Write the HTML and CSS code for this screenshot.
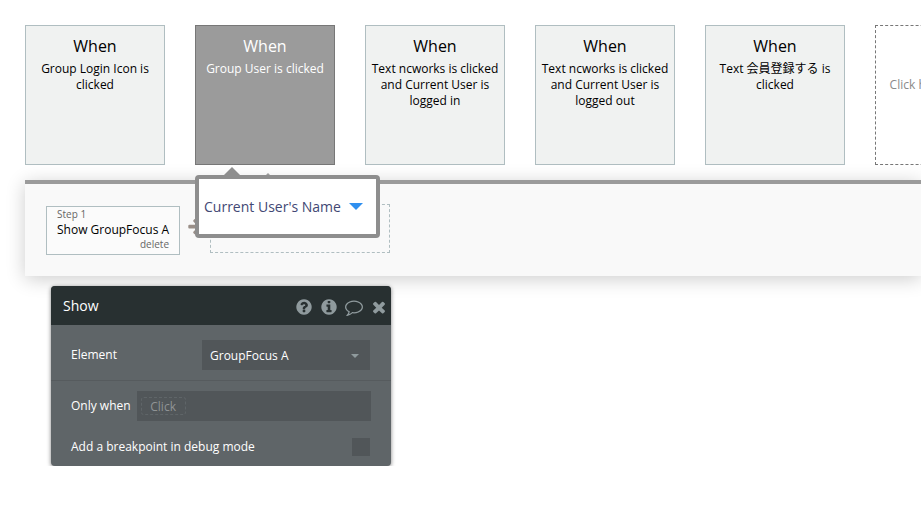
FILE: index.html
```html
<!DOCTYPE html>
<html lang="en">
<head>
    <meta charset="UTF-8">
    <meta name="viewport" content="width=device-width, initial-scale=1.0">
    <title>Workflow</title>
    <link rel="stylesheet" href="styles.css">
</head>
<body>
    <div class="events">
        <button class="event"><span class="when">When</span>Group Login Icon is clicked</button>
        <button class="event selected"><span class="when">When</span>Group User is clicked</button>
        <button class="event"><span class="when">When</span>Text ncworks is clicked and Current User is logged in</button>
        <button class="event"><span class="when">When</span>Text ncworks is clicked and Current User is logged out</button>
        <button class="event"><span class="when">When</span>Text 会員登録する is clicked</button>
        <button class="event new-event">Click here to add an event...</button>
    </div>

    <div class="actions">
        <div class="step">
            <span class="step-number">Step 1</span>
            <span class="step-name">Show GroupFocus A</span>
            <a href="#" class="delete">delete</a>
        </div>
        <svg class="arrow" viewBox="0 0 1792 1792"><path d="M1600 960q0 54-37 91l-651 651q-39 37-91 37-51 0-90-37l-75-75q-38-38-38-91t38-91l293-293h-704q-52 0-84.5-37.5t-32.5-90.5v-128q0-53 32.5-90.5t84.5-37.5h704l-293-294q-38-36-38-90t38-90l75-75q38-38 90-38 53 0 91 38l651 651q37 35 37 90z"/></svg>
        <div class="new-step"></div>
        <div class="event-caret"></div>
        <button class="popup">
            Current User's Name
            <svg class="popup-caret" viewBox="0 0 14 7"><path d="M0 0h14l-7 7z"/></svg>
        </button>
    </div>

    <div class="editor">
        <div class="editor-header">
            <span class="title">Show</span>
            <button class="icon" aria-label="Help"><svg viewBox="0 0 1792 1792"><path d="M1024 1376v-192q0-14-9-23t-23-9h-192q-14 0-23 9t-9 23v192q0 14 9 23t23 9h192q14 0 23-9t9-23zm256-672q0-88-55.5-163t-138.5-116-170-41q-243 0-371 213-15 24 8 42l132 100q7 6 19 6 16 0 25-12 53-68 86-92 34-24 86-24 48 0 85.5 26t37.5 59q0 38-20 61t-68 45q-63 28-115.5 86.5t-52.5 125.5v36q0 14 9 23t23 9h192q14 0 23-9t9-23q0-19 21.5-49.5t54.5-49.5q32-18 49-28.5t46-35 44.5-48 28-60.5 12.5-81zm384 192q0 209-103 385.5t-279.5 279.5-385.5 103-385.5-103-279.5-279.5-103-385.5 103-385.5 279.5-279.5 385.5-103 385.5 103 279.5 279.5 103 385.5z"/></svg></button>
            <button class="icon" aria-label="Info"><svg viewBox="0 0 1792 1792"><path d="M1152 1376v-160q0-14-9-23t-23-9h-96v-512q0-14-9-23t-23-9h-320q-14 0-23 9t-9 23v160q0 14 9 23t23 9h96v320h-96q-14 0-23 9t-9 23v160q0 14 9 23t23 9h448q14 0 23-9t9-23zm-128-896v-160q0-14-9-23t-23-9h-192q-14 0-23 9t-9 23v160q0 14 9 23t23 9h192q14 0 23-9t9-23zm640 416q0 209-103 385.5t-279.5 279.5-385.5 103-385.5-103-279.5-279.5-103-385.5 103-385.5 279.5-279.5 385.5-103 385.5 103 279.5 279.5 103 385.5z"/></svg></button>
            <button class="icon" aria-label="Comment"><svg viewBox="0 0 1792 1792"><path d="M896 384q-204 0-381.5 69.5t-282 187.5-104.5 255q0 112 71.5 213.5t201.5 175.5l87 50-27 96q-24 91-70 172 152-63 275-171l43-38 57 6q69 8 130 8 204 0 381.5-69.5t282-187.5 104.5-255-104.5-255-282-187.5-381.5-69.5zm896 512q0 174-120 321.5t-326 233-450 85.5q-70 0-145-8-198 175-460 242-49 14-114 22h-5q-15 0-27-10.5t-16-27.5v-1q-3-4-.5-12t2-10 4.5-9.5l6-9 7-8.5 8-9q7-8 31-34.5t34.5-38 31-39.5 32.5-51 27-59 26-76q-157-89-247.5-220t-90.5-281q0-174 120-321.5t326-233 450-85.5 450 85.5 326 233 120 321.5z"/></svg></button>
            <button class="icon" aria-label="Close"><svg viewBox="0 0 1792 1792"><path d="M1490 1322q0 40-28 68l-136 136q-28 28-68 28t-68-28l-294-294-294 294q-28 28-68 28t-68-28l-136-136q-28-28-28-68t28-68l294-294-294-294q-28-28-28-68t28-68l136-136q28-28 68-28t68 28l294 294 294-294q28-28 68-28t68 28l136 136q28 28 28 68t-28 68l-294 294 294 294q28 28 28 68z"/></svg></button>
        </div>
        <div class="row element-row">
            <label for="element">Element</label>
            <div class="dropdown">
                <select id="element">
                    <option>GroupFocus A</option>
                </select>
                <svg class="dropdown-caret" viewBox="0 0 8 4"><path d="M0 0h8l-4 4z"/></svg>
            </div>
        </div>
        <div class="row">
            <label for="condition">Only when</label>
            <div class="composer">
                <input type="text" id="condition" class="condition" placeholder="Click">
            </div>
        </div>
        <div class="row breakpoint-row">
            <label for="breakpoint">Add a breakpoint in debug mode</label>
            <input type="checkbox" id="breakpoint" class="checkbox">
        </div>
    </div>
</body>
</html>
```

FILE: styles.css
```css
* {
    box-sizing: border-box;
}
body {
    margin: 0;
    padding: 25px 0 0 25px;
    background: white;
    font-family: "Open Sans", "Noto Sans CJK JP", sans-serif;
    font-size: 12px;
    line-height: 16px;
}
button, input, select {
    font: inherit;
    margin: 0;
}
button {
    cursor: pointer;
}

/* events */
.events {
    display: flex;
    gap: 30px;
    overflow: hidden;
}
.event {
    flex: none;
    display: flex;
    flex-direction: column;
    align-items: center;
    width: 140px;
    height: 140px;
    padding: 10px 5px;
    border: 1px solid #b0bec1;
    background: #f0f2f1;
    color: black;
    text-align: center;
}
.when {
    font-size: 16px;
    line-height: 20px;
    margin-bottom: 5px;
}
.selected {
    background: #9b9b9b;
    border-color: #777777;
    color: white;
}
.new-event {
    padding-top: 51px;
    border: 1px dashed #777777;
    background: white;
    color: #8a8a8a;
}

/* actions */
.actions {
    position: relative;
    display: flex;
    align-items: center;
    height: 96px;
    margin-top: 15px;
    padding-left: 21px;
    border-top: 4px solid #9b9b9b;
    background: #f9f9f9;
    box-shadow: 0 3px 18px rgba(0, 0, 0, 0.2);
}
.step {
    display: flex;
    flex-direction: column;
    width: 134px;
    height: 49px;
    padding: 0 10px;
    border: 1px solid #b0bec1;
    background: #fbfbfb;
    line-height: 15px;
}
.step-number {
    font-size: 10px;
    color: #666666;
}
.step-name {
    white-space: nowrap;
}
.delete {
    align-self: flex-end;
    font-size: 10px;
    color: #666666;
    text-decoration: none;
}
.arrow {
    width: 18px;
    height: 18px;
    margin: 0 5px 8px 7px;
    fill: #9a8f88;
}
.new-step {
    width: 180px;
    height: 49px;
    margin-bottom: 4px;
    border: 1px dashed #b0bec1;
}
.event-caret {
    position: absolute;
    left: 234px;
    top: -11px;
    border: 9px solid transparent;
    border-top: 0;
    border-bottom-color: #9b9b9b;
}
.popup {
    position: absolute;
    left: 170px;
    top: -9px;
    display: flex;
    align-items: center;
    justify-content: space-between;
    width: 185px;
    height: 63px;
    padding: 0 13px 0 5px;
    border: 4px solid #8e8e8e;
    border-radius: 4px;
    background: white;
    color: #424874;
    font-size: 14px;
    white-space: nowrap;
}
.popup::before {
    content: "";
    position: absolute;
    left: 25px;
    top: -12px;
    border: 8px solid transparent;
    border-top: 0;
    border-bottom-color: #8e8e8e;
}
.popup-caret {
    width: 14px;
    height: 7px;
    fill: #2f8fef;
}

/* property editor */
.editor {
    position: relative;
    width: 340px;
    margin: 10px 0 0 26px;
    border-radius: 4px;
    overflow: hidden;
    background: #5f6568;
    color: white;
    box-shadow: 0 1px 4px rgba(0, 0, 0, 0.5);
}
.editor-header {
    display: flex;
    align-items: center;
    height: 39px;
    padding-left: 12px;
    background: #283031;
}
.title {
    flex: 1;
    font-size: 14px;
}
.icon {
    display: flex;
    justify-content: center;
    width: 25px;
    padding: 2px 0 0;
    border: 0;
    background: none;
}
.icon svg {
    width: 18px;
    height: 18px;
    fill: #8f9a9d;
}
.row {
    display: flex;
    align-items: center;
    gap: 6px;
    padding: 10px 20px 0;
}
.element-row {
    justify-content: space-between;
    padding: 15px 21px 10px 20px;
    border-bottom: 1px solid #565b5e;
}
.dropdown {
    position: relative;
    width: 168px;
}
.dropdown select {
    appearance: none;
    display: block;
    width: 100%;
    height: 30px;
    padding: 2px 8px 0;
    border: 0;
    background: #515659;
    color: white;
}
.dropdown-caret {
    position: absolute;
    right: 11px;
    top: 14px;
    width: 8px;
    height: 4px;
    fill: #8f9a9d;
    pointer-events: none;
}
.composer {
    flex: 1;
    display: flex;
    align-items: center;
    height: 30px;
    padding: 0 4px;
    background: #515659;
}
.condition {
    width: 45px;
    height: 18px;
    padding: 0;
    border: 1px dashed #5f6568;
    border-radius: 3px;
    background: none;
    color: white;
    text-align: center;
}
.condition::placeholder {
    color: #909395;
}
.breakpoint-row {
    justify-content: space-between;
    padding: 17px 21px 10px 20px;
}
.checkbox {
    appearance: none;
    width: 18px;
    height: 18px;
    background: #515659;
}
```
